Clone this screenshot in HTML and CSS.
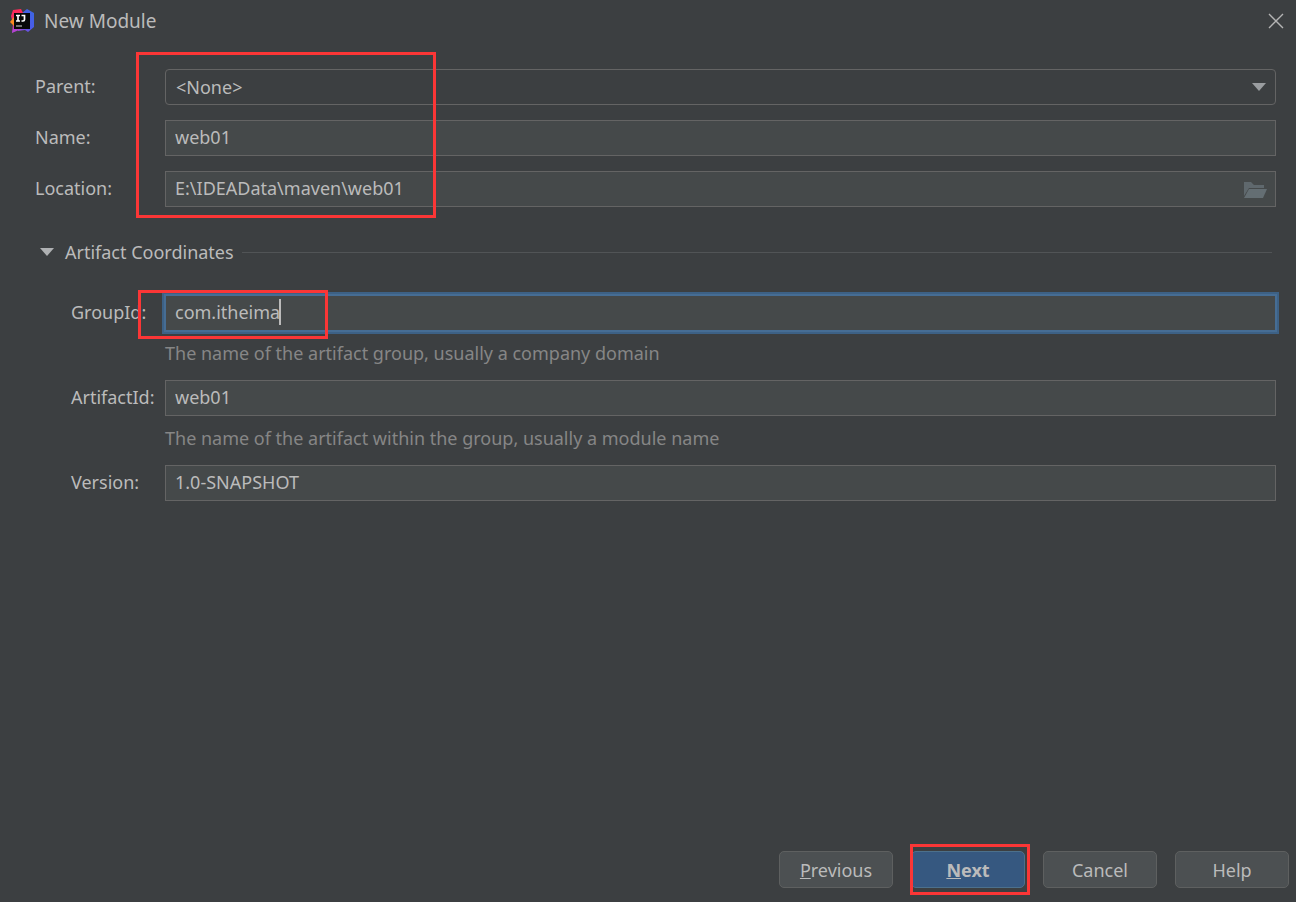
FILE: index.html
```html
<!DOCTYPE html>
<html lang="en">
<head>
<meta charset="utf-8">
<title>New Module</title>
<link rel="stylesheet" href="styles.css">
</head>
<body>
<div class="dialog">
  <header class="titlebar">
    <svg class="logo" viewBox="0 0 24 24" aria-hidden="true">
      <defs>
        <linearGradient id="blue" x1="0" y1="1" x2="1" y2="0"><stop offset="0" stop-color="#a044d8"/><stop offset=".5" stop-color="#4b5be8"/><stop offset="1" stop-color="#3a68e0"/></linearGradient>
        <linearGradient id="pink" x1="0" y1="0" x2="0" y2="1"><stop offset="0" stop-color="#ff2857"/><stop offset=".5" stop-color="#f5326a"/><stop offset="1" stop-color="#a743d5"/></linearGradient>
      </defs>
      <path d="M12 4 17 0 24 4 24 18 18 23 15 21 8 22 10 4Z" fill="url(#blue)"/>
      <path d="M3 1 11 0 14 6 8 18 2 24 3 15 1 7Z" fill="url(#pink)"/>
      <path d="M4 8 0 13 4 17 6 10Z" fill="#fc8a20"/>
      <path d="M2 24 4 17 16 19 9 21Z" fill="#b345d3"/>
      <path d="M4 4H20V20H4Z" fill="#080808"/>
      <path d="M6 6.500H10M8 6.500V12M6 12H10M11.500 6.500H14.500V10.500Q14.500 12 13 12H11.500" fill="none" stroke="#fff" stroke-width="1.700"/>
      <path d="M6 17H12" stroke="#b8b8b8" stroke-width="1.200"/>
    </svg>
    <h1 class="title">New Module</h1>
    <button class="close" type="button" aria-label="Close">
      <svg viewBox="0 0 16 16"><path d="M1 1 15 15M15 1 1 15" fill="none" stroke="#b4b4b4" stroke-width="1.400"/></svg>
    </button>
  </header>

  <form class="form">
    <section class="basics">
      <label for="parent">Parent:</label>
      <div class="field">
        <select class="control combo" id="parent"><option>&lt;None&gt;</option></select>
        <svg class="arrow combo-arrow" viewBox="0 0 14 8" aria-hidden="true"><path d="M0 0H14L7 8Z"/></svg>
      </div>
      <label for="name">Name:</label>
      <input class="control" id="name" type="text" value="web01">
      <label for="location">Location:</label>
      <div class="field">
        <input class="control" id="location" type="text" value="E:\IDEAData\maven\web01">
        <button class="browse" type="button" aria-label="Browse">
          <svg viewBox="0 0 24 18"><path d="M0 1H7L10 4H20V7H5L0 15Z" fill="#5f686d"/><path d="M5 8H23L19 17H0Z" fill="#646e73"/></svg>
        </button>
      </div>
      <span class="mark mark-basics"></span>
    </section>

    <div class="section-head">
      <button class="toggle" type="button" aria-expanded="true">
        <svg class="arrow" viewBox="0 0 14 8" aria-hidden="true"><path d="M0 0H14L7 8Z"/></svg>
        <span>Artifact Coordinates</span>
      </button>
      <span class="rule"></span>
    </div>

    <section class="coordinates">
      <label for="group">GroupId:</label>
      <div class="field">
        <input class="control active" id="group" type="text" value="com.itheima">
        <span class="caret"></span>
      </div>
      <p class="hint">The name of the artifact group, usually a company domain</p>
      <label for="artifact">ArtifactId:</label>
      <input class="control" id="artifact" type="text" value="web01">
      <p class="hint">The name of the artifact within the group, usually a module name</p>
      <label for="version">Version:</label>
      <input class="control" id="version" type="text" value="1.0-SNAPSHOT">
      <span class="mark mark-group"></span>
    </section>
  </form>

  <footer class="actions">
    <button class="btn" type="button"><u>P</u>revious</button>
    <div class="next">
      <button class="btn primary" type="button"><u>N</u>ext</button>
      <span class="mark mark-next"></span>
    </div>
    <button class="btn" type="button">Cancel</button>
    <button class="btn" type="button">Help</button>
  </footer>
</div>
</body>
</html>
```
FILE: styles.css
```css
* { box-sizing: border-box; }

body {
  margin: 0;
  background: #3c3f41;
  color: #bbbbbb;
  font-family: "Noto Sans", "Open Sans", sans-serif;
  font-size: 18px;
  line-height: 24px;
}

button, input, select { font: inherit; color: inherit; }
button { padding: 0; border: 0; background: none; }
svg { display: block; }

.dialog {
  display: flex;
  flex-direction: column;
  min-height: 100vh;
}

.titlebar {
  display: flex;
  align-items: center;
  gap: 10px;
  height: 42px;
  padding: 0 12px 0 10px;
}
.logo { width: 24px; height: 24px; }
.title { flex: 1; margin: 0; font-size: 19px; font-weight: 400; }
.close { width: 16px; height: 16px; }

.form { flex: 1; padding: 27px 20px 0 35px; }

.basics, .coordinates {
  position: relative;
  display: grid;
  align-items: center;
}
.basics { grid-template-columns: 130px 1fr; row-gap: 15px; }
.coordinates { grid-template-columns: 94px 1fr; padding-left: 36px; }

label { padding-bottom: 2px; }

.field { position: relative; }

.control {
  display: block;
  width: 100%;
  height: 36px;
  padding: 0 9px 2px;
  border: 1px solid #646464;
  border-radius: 0;
  outline: 0;
  background: #45494a;
}
.combo {
  appearance: none;
  padding: 0 10px;
  border-radius: 4px;
  background: #3c3f41;
}
.active { border-color: #466d94; box-shadow: 0 0 0 1px #466d94, 0 0 0 3px #3d6185; }

.arrow { width: 14px; height: 8px; fill: #afb1b3; }
.combo-arrow { position: absolute; right: 10px; top: 14px; fill: #9a9da0; pointer-events: none; }

.browse { position: absolute; right: 8px; top: 10px; width: 24px; height: 18px; }

.caret { position: absolute; left: 114px; top: 4px; width: 2px; height: 26px; background: #bbbbbb; }

.section-head {
  display: flex;
  align-items: center;
  gap: 8px;
  margin: 33px 4px 31px 5px;
}
.toggle { display: flex; align-items: center; gap: 11px; }
.rule { flex: 1; height: 1px; background: #515456; }

.hint { grid-column: 2; margin: 10px 0 15px; color: #868686; }

.actions {
  display: flex;
  justify-content: flex-end;
  gap: 18px;
  padding: 0 7px 14px;
}
.btn {
  width: 114px;
  height: 37px;
  border: 1px solid #5e6060;
  border-radius: 5px;
  background: #4c5052;
}
.primary { border-color: #4c708c; background: #365880; font-weight: 700; }
.next { position: relative; }

.mark { position: absolute; border: 3px solid #fb3636; pointer-events: none; }
.mark-basics { left: 101px; top: -17px; width: 300px; height: 166px; }
.mark-group { left: 103px; top: -5px; width: 190px; height: 49px; }
.mark-next { inset: -7px -5px -7px -1px; }
```
